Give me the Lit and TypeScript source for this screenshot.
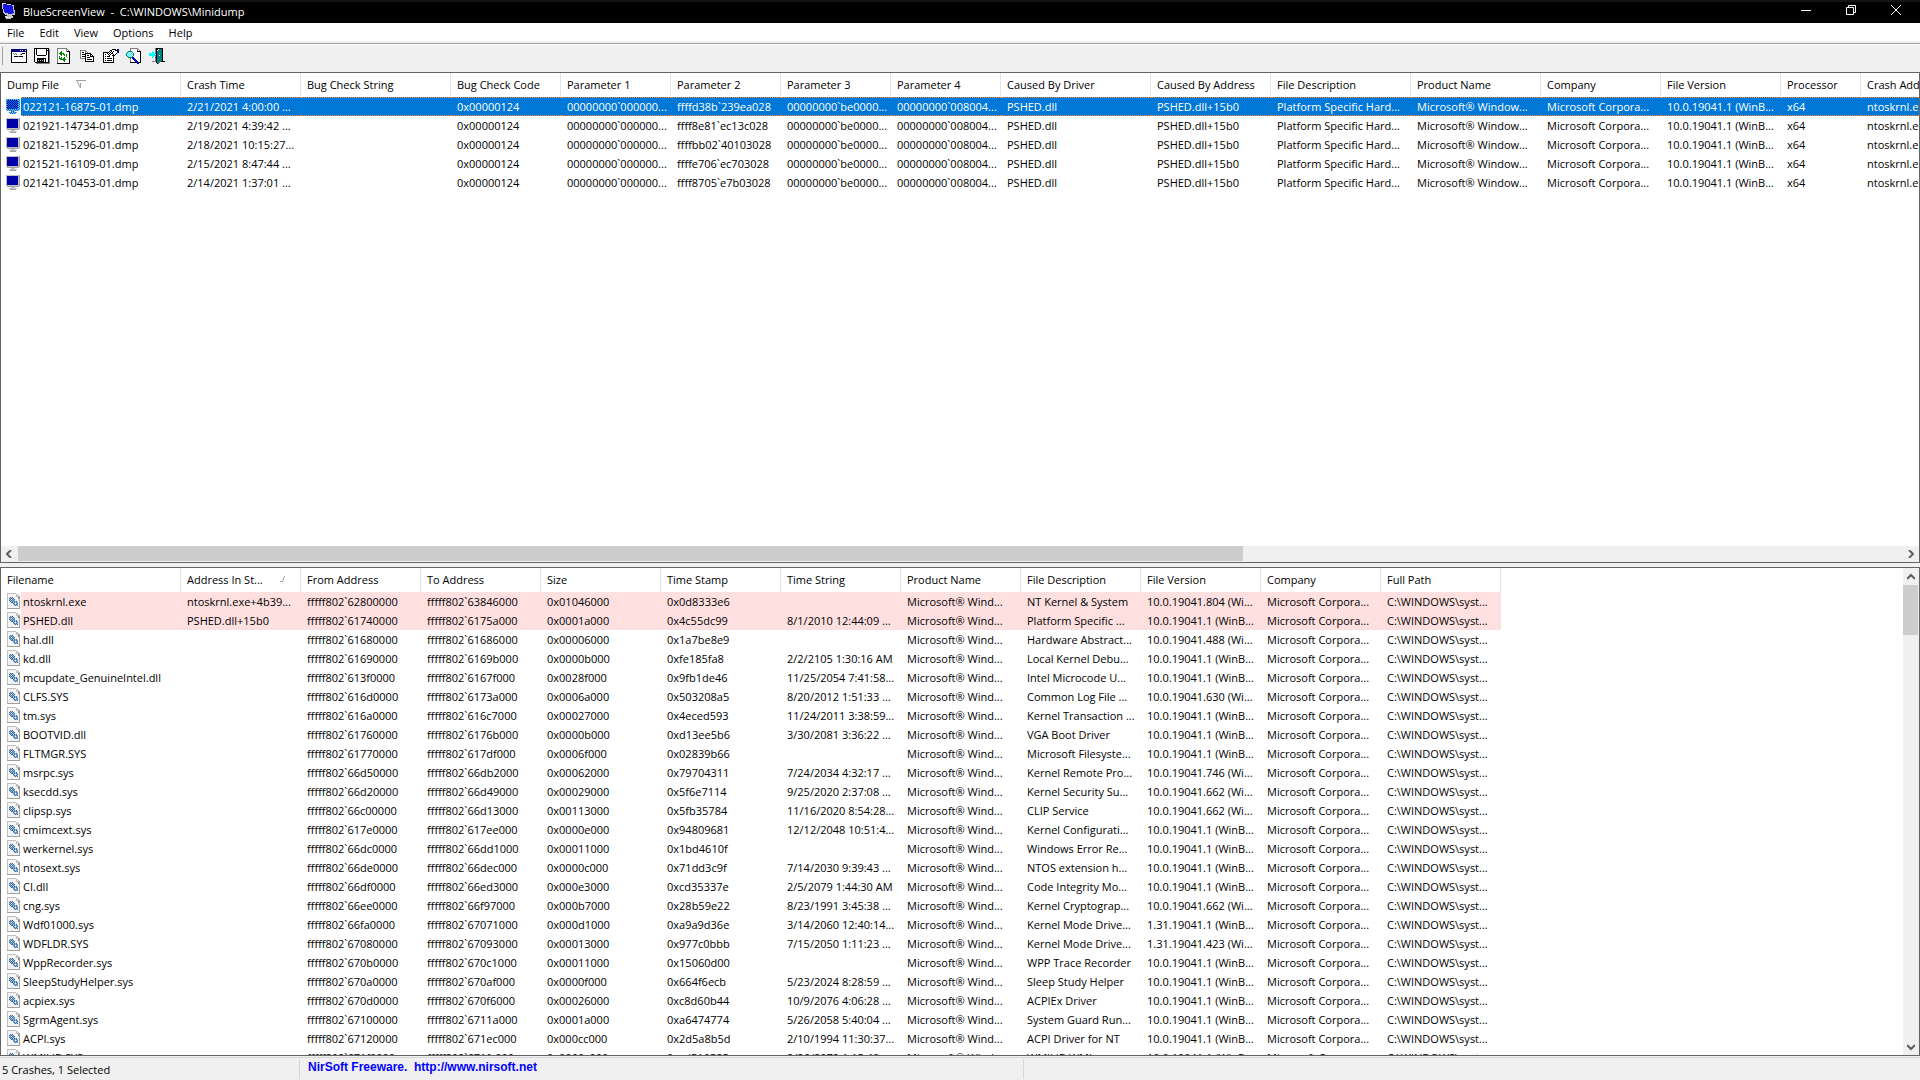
import { LitElement, html, svg, css, nothing } from "lit";
import { customElement, property } from "lit/decorators.js";
import { classMap } from "lit/directives/class-map.js";

type Column = { label: string; width: number; sort?: "desc" | "asc" };
type Row = { cells: string[]; state?: "selected" | "flagged" };

const COLORS: Record<string, string> = {
  K: "#000000", W: "#ffffff", N: "#000080", B: "#0000ff", G: "#008000",
  g: "#808080", s: "#c0c0c0", T: "#008080", C: "#00ffff",
  n: "#0000a8", b: "#1414e6", p: "#f4f4f4", a: "#a0a0a0",
  u: "#3a6ea5", v: "#9dbcd8", h: "#0078d7", y: "#7fb2dc", m: "#5a78c8",
  L: "#d8d8d8",
};

/* Small bitmaps: one character per pixel, a dot is transparent. */
const BITMAPS: Record<string, string[]> = {
  window: [
    "................",
    "NNNNNNNNNNNNNNNN",
    "NNNNNNNNNWNWNNWN",
    "KNNNNNNNNNNNNNNK",
    "KWWWWWWWWWWWWWWK",
    "KWgWgsWWWWWKKKWK",
    "KWWgWgWWWgKWWWWK",
    "KWWWWWWWWWWWWWWK",
    "KWWKKKKgKKKKWWWK",
    "KWWWWWWWWWWWWWWK",
    "KWWWWWWWWWWWWWWK",
    "KWWWWWWWWWWWWWWK",
    "KWWWWWWWWWWWWWWK",
    "KWWWWWWWWWWWWWWK",
    "KKKKKKKKKKKKKKKK",
    "................",
  ],
  save: [
    "KKKKKKKKKKKKKKK.",
    "KWKWWWWWWWWWKWKg",
    "KWKWWWWWWWWWKKKg",
    "KWKWWWWWWWWWKWKg",
    "KWKWWWWWWWWWKWKg",
    "KWKWWWWWWWWWKWKg",
    "KWKWWWWWWWWWKWKg",
    "KWWKKKKKKKKKWWKg",
    "KWWWWWWWWWWWWWKg",
    "KWWWWWWWWWWWWWKg",
    "KWWKKKKKKKKKWWKg",
    "KWWKKKKKKKWKWWKg",
    "KWWKsKsKsKWKWWKg",
    "KWWKKKKKKKWKWWKg",
    ".KKKKKKKKKKKKKKg",
    "..gggggggggggggg",
  ],
  refresh: [
    "gggggggggg......",
    "gWWWWWWWWgg.....",
    "gWWWWWWWWgWg....",
    "gWWWGWWWWgKKK...",
    "gWWGGWWWWWWWK...",
    "gWGGGGGWWWWWK...",
    "gWWGGWGGWGWWK...",
    "gWWWGWWGWGWWK...",
    "gWGWWWWWWGWWK...",
    "gWGWGWWGWWWWK...",
    "gWGGGWGGWWWWK...",
    "gWWGGGGGGWWWK...",
    "gWWWWWGGWWWWK...",
    "gWWWWWWGWWWWK...",
    "gWWWWWWWWWWWK...",
    "KKKKKKKKKKKKK...",
  ],
  copy: [
    "................",
    "................",
    "gggggg..........",
    "gWWWWgg.........",
    "gWKKWgWg........",
    "gWWWWKKKKKK.....",
    "gWKKKKWWWWKK....",
    "gWWWWKWKKWKWK...",
    "gWKKKKWWWWKKKK..",
    "gWWWWKWKKKWWWK..",
    "gggggKWWWWWWWK..",
    ".....KWKKKKKWK..",
    ".....KWWWWWWWK..",
    ".....KKKKKKKKK..",
    "................",
    "................",
  ],
  properties: [
    "................",
    ".........KKKK.NN",
    ".......KKWWWKKNN",
    "......KWKWKWWWNN",
    "KKKKKKWKWKWWWWNN",
    "KWWWKWKWKKWWWK..",
    "KWKWWKWKWWKWK...",
    "KWWWWWKWWKKK....",
    "KWKWKKKWWWK.....",
    "KWWWWWWWWWK.....",
    "KWKWKKKKKWK.....",
    "KWWWWWWWWWK.....",
    "KWKWKKKKKWK.....",
    "KWWWWWWWWWK.....",
    "KKKKKKKKKKK.....",
    "................",
  ],
  find: [
    "....gggggggg....",
    "....gWWWWWWgg...",
    "....gWWWWWWgWg..",
    "..TTTTWWWWWKKKK.",
    ".TCWCWTWWWWWWWK.",
    "TCWCWCWTWWWWWWK.",
    "TWCWCWCTWWWWWWK.",
    "TCWCWCWTWWWWWWK.",
    ".TCWCWTWWWWWWWK.",
    "..TTTTNNWWWWWWK.",
    "....gWNBNWWWWWK.",
    "....gWWNBNWWWWK.",
    "....gWWWNBNWWWK.",
    "....gWWWWNBNWWK.",
    "....KKKKKKNBNKK.",
    "...........NN...",
  ],
  exit: [
    "......gKKKKKKK..",
    "......gKKWTTTK..",
    "......gKWTTTTK..",
    "...C..gKTTTTTK..",
    "...CC.gKTTTTTK..",
    "CCCCCCgKTTTTTK..",
    "CCCCCCCKTTTTTK..",
    "CCCCCCgKTTWTTK..",
    "...CC.gKTTTTTK..",
    "...C..gKTTTTTK..",
    "......gKTTTTTK..",
    "......gKTTTTTK..",
    "......gKTTTTTK..",
    "...ggggKTTTgKKKK",
    ".......KTTg.....",
    "........Kg......",
  ],
  app: [
    ".LLLL...........",
    ".LbbbbLLLL......",
    ".LbbbbbbbbbLL...",
    ".Lbbbbbbbbbbs...",
    ".Lbbbbbbbbbbs...",
    ".sbbbbbbbbbbs...",
    "..sbbbbbbbbbs...",
    "..sbbbbbbbbbms..",
    "..sbbbbbbbbbms..",
    "..ssbbbbbbbbbs..",
    "...ssssbbbbmss..",
    "....ssssssssss..",
    "......LsssL.....",
    "....LLLsssLL....",
    "....sLLLLLss....",
    ".....sssss......",
  ],
  dump: [
    "................",
    "sssssssssssssa..",
    "snnnnnnnnnnnsa..",
    "snnnnnnnnnnnsa..",
    "snnnnnnnnnnnsa..",
    "snnnnnnnnnnnsa..",
    "snnnnnnnnnnnsa..",
    "snnnnnnnnnnnsa..",
    "snnnnnnnnnnnsa..",
    "snnnnnnnnnnnsa..",
    "snnnnnnnnnnnsa..",
    "sssssssssssssa..",
    ".aaaaaaaaaaaa...",
    ".....ssss.......",
    "...ssssssss.....",
    "....aaaaaa......",
  ],
  dumpSelected: [
    "................",
    "hyhyhyhyhyhyhy..",
    "yhnhnhnhnhnhyh..",
    "hnhnhnhnhnhnhy..",
    "yhnhnhnhnhnhyh..",
    "hnhnhnhnhnhnhy..",
    "yhnhnhnhnhnhyh..",
    "hnhnhnhnhnhnhy..",
    "yhnhnhnhnhnhyh..",
    "hnhnhnhnhnhnhy..",
    "yhnhnhnhnhnhyh..",
    "hyhyhyhyhyhyhy..",
    ".hyhyhyhyhyhy...",
    ".....hyhy.......",
    "...hyhyhyhy.....",
    "....hyhyhy......",
  ],
  module: [
    ".sssssssss......",
    ".sppppppppss....",
    ".sppppppppsLs...",
    ".sppppppppsssa..",
    ".sppuvupppppga..",
    ".spuvuvuppppga..",
    ".spvupuvuppppa..",
    ".spuvuvuvppppa..",
    ".sppuvuvuvuppa..",
    ".spppuuvuvuvpa..",
    ".spppppuvpvupa..",
    ".spppppvuvuvpa..",
    ".sppppppvuvupa..",
    ".spppppppppppa..",
    ".spppppppppppa..",
    ".aaaaaaaaaaaaa..",
  ],
};

function bitmap(name: string) {
  const rows = BITMAPS[name];
  return html`<svg class="bitmap" viewBox="0 0 16 16" width="16" height="16" shape-rendering="crispEdges" aria-hidden="true">
    ${rows.map((row, y) => {
      const runs = [];
      for (let x = 0; x < row.length; ) {
        let end = x + 1;
        while (end < row.length && row[end] === row[x]) end++;
        if (row[x] !== ".") {
          runs.push(svg`<rect x=${x} y=${y} width=${end - x} height="1" fill=${COLORS[row[x]]}></rect>`);
        }
        x = end;
      }
      return runs;
    })}
  </svg>`;
}

const bitmapStyles = css`
  .bitmap { display: block; flex: none; }
`;

const CRASH_COLUMNS: Column[] = [
  { label: "Dump File", width: 180, sort: "desc" },
  { label: "Crash Time", width: 120 },
  { label: "Bug Check String", width: 150 },
  { label: "Bug Check Code", width: 110 },
  { label: "Parameter 1", width: 110 },
  { label: "Parameter 2", width: 110 },
  { label: "Parameter 3", width: 110 },
  { label: "Parameter 4", width: 110 },
  { label: "Caused By Driver", width: 150 },
  { label: "Caused By Address", width: 120 },
  { label: "File Description", width: 140 },
  { label: "Product Name", width: 130 },
  { label: "Company", width: 120 },
  { label: "File Version", width: 120 },
  { label: "Processor", width: 80 },
  { label: "Crash Address", width: 120 },
];

const CRASHES: Row[] = [
  ["022121-16875-01.dmp", "2/21/2021 4:00:00 ...", "ffffd38b`239ea028"],
  ["021921-14734-01.dmp", "2/19/2021 4:39:42 ...", "ffff8e81`ec13c028"],
  ["021821-15296-01.dmp", "2/18/2021 10:15:27...", "ffffbb02`40103028"],
  ["021521-16109-01.dmp", "2/15/2021 8:47:44 ...", "ffffe706`ec703028"],
  ["021421-10453-01.dmp", "2/14/2021 1:37:01 ...", "ffff8705`e7b03028"],
].map(([file, time, second], index) => ({
  state: index === 0 ? "selected" : undefined,
  cells: [
    file, time, "", "0x00000124", "00000000`000000...", second,
    "00000000`be0000...", "00000000`008004...", "PSHED.dll", "PSHED.dll+15b0",
    "Platform Specific Hard...", "Microsoft® Window...", "Microsoft Corpora...",
    "10.0.19041.1 (WinB...", "x64", "ntoskrnl.exe",
  ],
}));

const MODULE_COLUMNS: Column[] = [
  { label: "Filename", width: 180 },
  { label: "Address In St...", width: 120, sort: "asc" },
  { label: "From Address", width: 120 },
  { label: "To Address", width: 120 },
  { label: "Size", width: 120 },
  { label: "Time Stamp", width: 120 },
  { label: "Time String", width: 120 },
  { label: "Product Name", width: 120 },
  { label: "File Description", width: 120 },
  { label: "File Version", width: 120 },
  { label: "Company", width: 120 },
  { label: "Full Path", width: 120 },
];

const WINB = "10.0.19041.1 (WinB...";
const MODULES: Row[] = [
  ["ntoskrnl.exe", "ntoskrnl.exe+4b39...", "62800000", "63846000", "0x01046000", "0x0d8333e6", "", "NT Kernel & System", "10.0.19041.804 (Wi..."],
  ["PSHED.dll", "PSHED.dll+15b0", "61740000", "6175a000", "0x0001a000", "0x4c55dc99", "8/1/2010 12:44:09 ...", "Platform Specific ...", WINB],
  ["hal.dll", "", "61680000", "61686000", "0x00006000", "0x1a7be8e9", "", "Hardware Abstract...", "10.0.19041.488 (Wi..."],
  ["kd.dll", "", "61690000", "6169b000", "0x0000b000", "0xfe185fa8", "2/2/2105 1:30:16 AM", "Local Kernel Debu...", WINB],
  ["mcupdate_GenuineIntel.dll", "", "613f0000", "6167f000", "0x0028f000", "0x9fb1de46", "11/25/2054 7:41:58...", "Intel Microcode U...", WINB],
  ["CLFS.SYS", "", "616d0000", "6173a000", "0x0006a000", "0x503208a5", "8/20/2012 1:51:33 ...", "Common Log File ...", "10.0.19041.630 (Wi..."],
  ["tm.sys", "", "616a0000", "616c7000", "0x00027000", "0x4eced593", "11/24/2011 3:38:59...", "Kernel Transaction ...", WINB],
  ["BOOTVID.dll", "", "61760000", "6176b000", "0x0000b000", "0xd13ee5b6", "3/30/2081 3:36:22 ...", "VGA Boot Driver", WINB],
  ["FLTMGR.SYS", "", "61770000", "617df000", "0x0006f000", "0x02839b66", "", "Microsoft Filesyste...", WINB],
  ["msrpc.sys", "", "66d50000", "66db2000", "0x00062000", "0x79704311", "7/24/2034 4:32:17 ...", "Kernel Remote Pro...", "10.0.19041.746 (Wi..."],
  ["ksecdd.sys", "", "66d20000", "66d49000", "0x00029000", "0x5f6e7114", "9/25/2020 2:37:08 ...", "Kernel Security Su...", "10.0.19041.662 (Wi..."],
  ["clipsp.sys", "", "66c00000", "66d13000", "0x00113000", "0x5fb35784", "11/16/2020 8:54:28...", "CLIP Service", "10.0.19041.662 (Wi..."],
  ["cmimcext.sys", "", "617e0000", "617ee000", "0x0000e000", "0x94809681", "12/12/2048 10:51:4...", "Kernel Configurati...", WINB],
  ["werkernel.sys", "", "66dc0000", "66dd1000", "0x00011000", "0x1bd4610f", "", "Windows Error Re...", WINB],
  ["ntosext.sys", "", "66de0000", "66dec000", "0x0000c000", "0x71dd3c9f", "7/14/2030 9:39:43 ...", "NTOS extension h...", WINB],
  ["CI.dll", "", "66df0000", "66ed3000", "0x000e3000", "0xcd35337e", "2/5/2079 1:44:30 AM", "Code Integrity Mo...", WINB],
  ["cng.sys", "", "66ee0000", "66f97000", "0x000b7000", "0x28b59e22", "8/23/1991 3:45:38 ...", "Kernel Cryptograp...", "10.0.19041.662 (Wi..."],
  ["Wdf01000.sys", "", "66fa0000", "67071000", "0x000d1000", "0xa9a9d36e", "3/14/2060 12:40:14...", "Kernel Mode Drive...", "1.31.19041.1 (WinB..."],
  ["WDFLDR.SYS", "", "67080000", "67093000", "0x00013000", "0x977c0bbb", "7/15/2050 1:11:23 ...", "Kernel Mode Drive...", "1.31.19041.423 (Wi..."],
  ["WppRecorder.sys", "", "670b0000", "670c1000", "0x00011000", "0x15060d00", "", "WPP Trace Recorder", WINB],
  ["SleepStudyHelper.sys", "", "670a0000", "670af000", "0x0000f000", "0x664f6ecb", "5/23/2024 8:28:59 ...", "Sleep Study Helper", WINB],
  ["acpiex.sys", "", "670d0000", "670f6000", "0x00026000", "0xc8d60b44", "10/9/2076 4:06:28 ...", "ACPIEx Driver", WINB],
  ["SgrmAgent.sys", "", "67100000", "6711a000", "0x0001a000", "0xa6474774", "5/26/2058 5:40:04 ...", "System Guard Run...", WINB],
  ["ACPI.sys", "", "67120000", "671ec000", "0x000cc000", "0x2d5a8b5d", "2/10/1994 11:30:37...", "ACPI Driver for NT", WINB],
  ["WMILIB.SYS", "", "671f0000", "671fc000", "0x0000c000", "0xcd510585", "2/26/2079 1:15:40 ...", "WMILIB WMI ...", WINB],
].map(([file, inStack, from, to, size, stamp, time, description, version], index) => ({
  state: index < 2 ? "flagged" : undefined,
  cells: [
    file, inStack, "fffff802`" + from, "fffff802`" + to, size, stamp, time,
    "Microsoft® Wind...", description, version, "Microsoft Corpora...", "C:\\WINDOWS\\syst...",
  ],
}));

@customElement("report-list")
export class ReportList extends LitElement {
  @property({ attribute: false }) columns: Column[] = [];
  @property({ attribute: false }) rows: Row[] = [];
  @property() icon = "module";
  @property() label = "";

  static styles = [bitmapStyles, css`
    :host { display: block; min-width: 0; min-height: 0; overflow: hidden; background: #ffffff; }
    .list { table-layout: fixed; border-collapse: collapse; border-spacing: 0; }
    .list th, .list td { padding: 0; font-weight: normal; text-align: left; }
    .head { display: flex; align-items: center; height: 24px; padding: 0 6px 2px; border-right: 1px solid #e5e5e5; white-space: pre; overflow: hidden; box-sizing: border-box; }
    .arrow { display: block; margin-left: 17px; }
    .cell { height: 19px; line-height: 19px; padding: 0 6px; white-space: pre; overflow: hidden; box-sizing: border-box; }
    .name { display: flex; }
    .slot { flex: none; width: 20px; height: 19px; padding: 1px 0 0 5px; box-sizing: border-box; }
    .name .cell { flex: 1; padding: 0 2px; min-width: 0; }
    .selected .cell { background: #0078d7; color: #ffffff; border: 1px dotted #ff8728; border-width: 1px 0; line-height: 17px; }
    .flagged .cell { background: #ffe0e0; }
  `];

  private arrow(sort: Column["sort"]) {
    if (!sort) return nothing;
    return sort === "desc"
      ? html`<svg class="arrow" width="10" height="8" viewBox="0 0 10 8" aria-hidden="true"><path d="M0 .5H10M1 1L4.500 8V3" fill="none" stroke="#a0a0a0"></path></svg>`
      : html`<svg class="arrow" width="5" height="6" viewBox="0 0 5 6" aria-hidden="true"><path d="M0 5.500H2.500L4.500 0" fill="none" stroke="#a0a0a0"></path></svg>`;
  }

  render() {
    const total = this.columns.reduce((sum, column) => sum + column.width, 0);
    return html`<table class="list" aria-label=${this.label} style="width:${total}px">
      <colgroup>${this.columns.map((c) => html`<col style="width:${c.width}px">`)}</colgroup>
      <thead><tr>${this.columns.map((c) => html`<th scope="col"><div class="head">${c.label}${this.arrow(c.sort)}</div></th>`)}</tr></thead>
      <tbody>${this.rows.map((row) => html`<tr class=${classMap({ selected: row.state === "selected", flagged: row.state === "flagged" })}>
        ${row.cells.map((cell, i) => i === 0
          ? html`<td><div class="name"><span class="slot">${bitmap(row.state === "selected" ? this.icon + "Selected" : this.icon)}</span><div class="cell">${cell}</div></div></td>`
          : html`<td><div class="cell">${cell}</div></td>`)}
      </tr>`)}</tbody>
    </table>`;
  }
}

@customElement("scroll-strip")
export class ScrollStrip extends LitElement {
  @property({ reflect: true }) direction: "horizontal" | "vertical" = "horizontal";
  @property({ type: Number }) share = 50;

  static styles = css`
    :host { display: flex; background: #f0f0f0; }
    :host([direction="vertical"]) { flex-direction: column; width: 16px; padding-right: 1px; box-sizing: border-box; }
    :host([direction="horizontal"]) { height: 16px; padding-bottom: 1px; box-sizing: border-box; }
    .step { flex: none; display: flex; align-items: center; justify-content: center; width: 17px; height: 15px; padding: 0; border: 0; background: none; }
    :host([direction="vertical"]) .step { width: 15px; height: 17px; }
    .track { flex: 1; min-width: 0; min-height: 0; }
    .thumb { width: 100%; height: 100%; background: #cdcdcd; }
  `;

  render() {
    const vertical = this.direction === "vertical";
    const before = vertical ? "M0 6L4 2L8 6" : "M5 0L1 4L5 8";
    const after = vertical ? "M0 2L4 6L8 2" : "M2 0L6 4L2 8";
    const glyph = (d: string) => html`<svg width="8" height="8" viewBox="0 0 8 8" aria-hidden="true"><path d=${d} fill="none" stroke="#606060" stroke-width="2"></path></svg>`;
    return html`
      <button class="step" aria-label=${vertical ? "Scroll up" : "Scroll left"}>${glyph(before)}</button>
      <div class="track"><div class="thumb" style="${vertical ? "height" : "width"}:${this.share}%"></div></div>
      <button class="step" aria-label=${vertical ? "Scroll down" : "Scroll right"}>${glyph(after)}</button>`;
  }
}

@customElement("app-root")
export class AppRoot extends LitElement {
  static styles = [bitmapStyles, css`
    :host { display: flex; flex-direction: column; height: 100vh; overflow: hidden; background: #f0f0f0; color: #000000; font: 11px "Open Sans", "Noto Sans", sans-serif; }
    button { font: inherit; color: inherit; }
    .title { display: flex; align-items: flex-start; height: 23px; flex: none; box-sizing: border-box; border-top: 2px solid #141414; padding-right: 2px; background: #000000; color: #ffffff; }
    .title .bitmap { margin: 1px 6px 0 1px; }
    .caption { flex: 1; white-space: pre; line-height: 19px; }
    .control { display: flex; align-items: center; justify-content: center; width: 45px; height: 16px; padding: 0; border: 0; background: none; }
    .menu { display: flex; gap: 1px; height: 18px; flex: none; background: #ffffff; }
    .item { padding: 0 7px; height: 18px; border: 0; background: none; }
    .tools { display: flex; align-items: center; height: 29px; flex: none; margin-top: 2px; padding: 0 0 4px 2px; box-sizing: border-box; border-top: 1px solid #a0a0a0; box-shadow: inset 0 1px #ffffff; }
    .grip { width: 1px; height: 18px; margin-right: 4px; background: #a0a0a0; }
    .tool { display: flex; width: 23px; height: 22px; align-items: center; padding: 0 0 0 4px; border: 0; background: none; }
    .panes { flex: 1; min-height: 0; display: grid; grid-template-rows: 491fr 4px 489fr; }
    .pane { display: grid; min-width: 0; min-height: 0; border: 1px solid #646464; background: #ffffff; }
    .upper { grid-template-rows: minmax(0, 1fr) 16px; grid-template-columns: minmax(0, 1fr); grid-row: 1; }
    .lower { grid-template-columns: minmax(0, 1fr) 16px; grid-template-rows: minmax(0, 1fr); grid-row: 3; }
    .status { display: flex; flex: none; height: 24px; box-sizing: border-box; padding-top: 2px; background: linear-gradient(#f0f0f0 1px, #d7d7d7 1px, #d7d7d7 2px, #f0f0f0 2px); }
    .part { display: flex; align-items: center; padding: 0 2px; height: 20px; margin-top: 1px; box-sizing: border-box; border-right: 1px solid #d7d7d7; }
    .count { width: 300px; }
    .credit { width: 724px; padding: 0 8px 4px; }
    .link { color: #0000ff; font: bold 12px "Liberation Sans", Arial, sans-serif; text-decoration: none; white-space: pre; }
  `];

  render() {
    const tools = [
      ["window", "Advanced Options"], ["save", "Save Selected Items"], ["refresh", "Refresh"], ["copy", "Copy Selected Items"],
      ["properties", "Properties"], ["find", "Find"], ["exit", "Exit"],
    ];
    return html`
      <header class="title">
        ${bitmap("app")}
        <span class="caption">BlueScreenView  -  C:\\WINDOWS\\Minidump</span>
        <button class="control" aria-label="Minimize"><svg width="10" height="10" viewBox="0 0 10 10"><path d="M0 5.500H10" stroke="#fff"></path></svg></button>
        <button class="control" aria-label="Restore"><svg width="10" height="10" viewBox="0 0 10 10" fill="none" stroke="#fff"><path d="M.5 2.500H7.500V9.500H.5ZM2.500 2.500V.5H9.500V7.500H7.500"></path></svg></button>
        <button class="control" aria-label="Close"><svg width="10" height="10" viewBox="0 0 10 10"><path d="M0 0L10 10M10 0L0 10" stroke="#fff"></path></svg></button>
      </header>
      <nav class="menu" aria-label="Menu">
        ${["File", "Edit", "View", "Options", "Help"].map((name) => html`<button class="item">${name}</button>`)}
      </nav>
      <div class="tools" role="toolbar">
        <span class="grip"></span>
        ${tools.map(([icon, name]) => html`<button class="tool" aria-label=${name}>${bitmap(icon)}</button>`)}
      </div>
      <main class="panes">
        <section class="pane upper">
          <report-list label="Crashes" icon="dump" .columns=${CRASH_COLUMNS} .rows=${CRASHES}></report-list>
          <scroll-strip direction="horizontal" share="65"></scroll-strip>
        </section>
        <section class="pane lower">
          <report-list label="Drivers" icon="module" .columns=${MODULE_COLUMNS} .rows=${MODULES}></report-list>
          <scroll-strip direction="vertical" share="11"></scroll-strip>
        </section>
      </main>
      <footer class="status">
        <div class="part count">5 Crashes, 1 Selected</div>
        <div class="part credit"><a class="link" href="http://www.nirsoft.net">NirSoft Freeware.  http://www.nirsoft.net</a></div>
      </footer>`;
  }
}
